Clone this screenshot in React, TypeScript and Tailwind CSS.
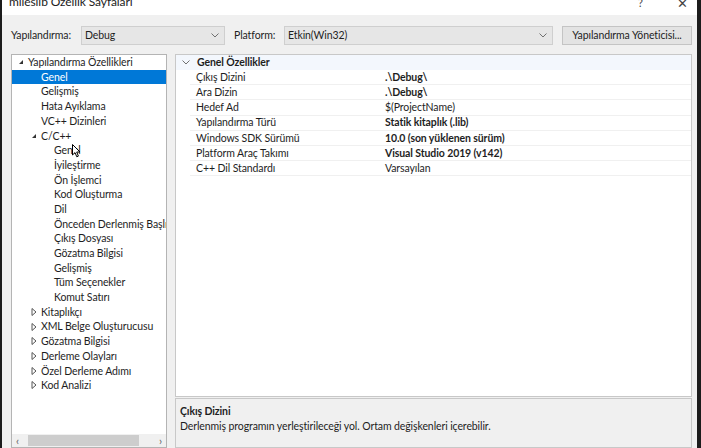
import React from 'react'

type TreeItem = { label: string; level: number; arrow?: 'open' | 'closed'; selected?: boolean; cursor?: boolean }

const tree: TreeItem[] = [
  { label: 'Yapılandırma Özellikleri', level: 0, arrow: 'open' },
  { label: 'Genel', level: 1, selected: true },
  { label: 'Gelişmiş', level: 1 },
  { label: 'Hata Ayıklama', level: 1 },
  { label: 'VC++ Dizinleri', level: 1 },
  { label: 'C/C++', level: 1, arrow: 'open' },
  { label: 'Genel', level: 2, cursor: true },
  { label: 'İyileştirme', level: 2 },
  { label: 'Ön İşlemci', level: 2 },
  { label: 'Kod Oluşturma', level: 2 },
  { label: 'Dil', level: 2 },
  { label: 'Önceden Derlenmiş Başlık', level: 2 },
  { label: 'Çıkış Dosyası', level: 2 },
  { label: 'Gözatma Bilgisi', level: 2 },
  { label: 'Gelişmiş', level: 2 },
  { label: 'Tüm Seçenekler', level: 2 },
  { label: 'Komut Satırı', level: 2 },
  { label: 'Kitaplıkçı', level: 1, arrow: 'closed' },
  { label: 'XML Belge Oluşturucusu', level: 1, arrow: 'closed' },
  { label: 'Gözatma Bilgisi', level: 1, arrow: 'closed' },
  { label: 'Derleme Olayları', level: 1, arrow: 'closed' },
  { label: 'Özel Derleme Adımı', level: 1, arrow: 'closed' },
  { label: 'Kod Analizi', level: 1, arrow: 'closed' },
]

const props: { name: string; value: string; bold?: boolean }[] = [
  { name: 'Çıkış Dizini', value: '.\\Debug\\', bold: true },
  { name: 'Ara Dizin', value: '.\\Debug\\', bold: true },
  { name: 'Hedef Ad', value: '$(ProjectName)' },
  { name: 'Yapılandırma Türü', value: 'Statik kitaplık (.lib)', bold: true },
  { name: 'Windows SDK Sürümü', value: '10.0 (son yüklenen sürüm)', bold: true },
  { name: 'Platform Araç Takımı', value: 'Visual Studio 2019 (v142)', bold: true },
  { name: 'C++ Dil Standardı', value: 'Varsayılan' },
]

const indent = ['pl-[6px]', 'pl-[19px]', 'pl-[32px]']

function Chevron() {
  return (
    <svg width="8" height="5" viewBox="0 0 8 5" className="text-[#707070]">
      <path d="M0.5 0.5 L4 4 L7.5 0.5" fill="none" stroke="currentColor" strokeWidth="1" />
    </svg>
  )
}

function Arrow({ kind }: { kind?: 'open' | 'closed' }) {
  if (!kind) return <span className="w-[10px] shrink-0" />
  if (kind === 'open')
    return (
      <svg width="10" height="10" viewBox="0 0 10 10" className="shrink-0">
        <path d="M5 3 L5 7 L1 7 Z" fill="#333" />
      </svg>
    )
  return (
    <svg width="10" height="10" viewBox="0 0 10 10" className="shrink-0">
      <path d="M1 1.5 L5 5 L1 8.5 Z" fill="none" stroke="#555" strokeWidth="1" />
    </svg>
  )
}

function Cursor() {
  return (
    <svg width="9" height="14" viewBox="0 0 9 14" className="absolute left-[18px] top-[-1px]">
      <path d="M0.5 0.5 L0.5 11 L3 8.6 L4.8 12.8 L6.4 12.1 L4.7 8 L8 8 Z" fill="#fff" stroke="#000" strokeWidth="1" />
    </svg>
  )
}

function Dropdown({ value, className }: { value: string; className: string }) {
  return (
    <div className={`flex h-[19px] items-center justify-between border border-[#cfcfcf] bg-[#e6e6e6] pl-[3px] pr-[5px] ${className}`}>
      <span>{value}</span>
      <Chevron />
    </div>
  )
}

export default function App() {
  return (
    <div
      className="flex h-[448px] w-[701px] overflow-hidden bg-[#1c1c1c] text-[10.5px] tracking-[-0.1px] text-[#1e1e1e]"
      style={{ fontFamily: 'Lato, "Noto Sans", sans-serif' }}
    >
      <div className="ml-[2px] flex w-[695px] flex-col bg-[#f0f0f0]">
        {/* title bar */}
        <div className="relative h-[15px] shrink-0 overflow-hidden bg-white">
          <div className="absolute left-[7px] top-[-7px] text-[12px] leading-[18px] text-[#222]">mileslib Özellik Sayfaları</div>
          <div className="absolute left-[636px] top-[-6px] text-[11px] leading-[18px] text-[#444]">?</div>
          <div className="absolute left-[675px] top-[-6px] text-[13px] leading-[18px] text-[#444]">✕</div>
        </div>

        {/* toolbar */}
        <div className="flex shrink-0 items-center whitespace-nowrap pt-[11px] pl-[9px]">
          <span className="w-[70px]">Yapılandırma:</span>
          <Dropdown value="Debug" className="w-[144px]" />
          <span className="ml-[9px] w-[50px]">Platform:</span>
          <Dropdown value="Etkin(Win32)" className="w-[269px]" />
          <div className="ml-[9px] flex h-[19px] w-[130px] items-center justify-center border border-[#c4c4c4] bg-[#e3e3e3]">
            Yapılandırma Yöneticisi...
          </div>
        </div>

        {/* main */}
        <div className="flex min-h-0 flex-1 pt-[9px] pl-[9px]">
          {/* tree */}
          <div className="flex w-[156px] shrink-0 flex-col border border-[#b4b4b4] bg-white">
            <div className="flex-1 overflow-hidden">
              {tree.map((t, i) => (
                <div
                  key={i}
                  className={`flex h-[14.7px] items-center whitespace-nowrap leading-none ${indent[t.level]} ${
                    t.selected ? 'bg-[#0078d7] text-white' : ''
                  }`}
                >
                  <Arrow kind={t.arrow} />
                  <span className="relative">
                    {t.label}
                    {t.cursor && <Cursor />}
                  </span>
                </div>
              ))}
            </div>
            <div className="flex h-[13px] shrink-0 items-center bg-[#f0f0f0] px-[4px]">
              <span className="w-[12px] text-[11px] leading-none text-[#606060]">‹</span>
              <div className="h-[11px] w-[111px] bg-[#cdcdcd]" />
              <div className="flex-1" />
              <span className="text-[11px] leading-none text-[#606060]">›</span>
            </div>
          </div>

          {/* right */}
          <div className="ml-[8px] flex w-[517px] flex-col">
            <div className="h-[343px] border border-[#c8c8c8] bg-white">
              <div className="flex h-[15px] items-center bg-[#f3f7fd]">
                <span className="ml-[6px] w-[15px]">
                  <Chevron />
                </span>
                <span className="font-bold">Genel Özellikler</span>
              </div>
              {props.map((p, i) => (
                <div key={i} className="ml-[14px] flex h-[15.2px] items-center border-b border-[#f0f0f0] leading-none">
                  <span className="w-[195px] pl-[6px]">{p.name}</span>
                  <span className={p.bold ? 'font-bold' : ''}>{p.value}</span>
                </div>
              ))}
            </div>
            <div className="mt-[1px] flex-1 border border-[#c8c8c8] bg-[#f0f0f0] px-[4px] pt-[5px] leading-[15px]">
              <div className="font-bold">Çıkış Dizini</div>
              <div>Derlenmiş programın yerleştirileceği yol. Ortam değişkenleri içerebilir.</div>
            </div>
          </div>
        </div>
      </div>
    </div>
  )
}
